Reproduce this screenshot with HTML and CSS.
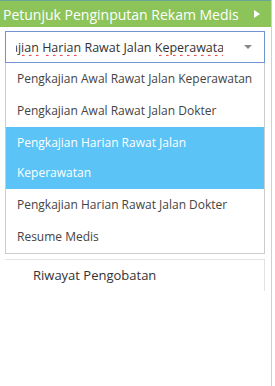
FILE: index.html
```html
<!DOCTYPE html>
<html lang="en">
<head>
    <meta charset="UTF-8">
    <meta name="viewport" content="width=device-width, initial-scale=1.0">
    <title>Petunjuk Penginputan Rekam Medis</title>
    <link rel="stylesheet" href="styles.css">
</head>
<body>
    <div class="sidebar">
        <div class="header">
            <span class="title">Petunjuk Penginputan Rekam Medis</span>
            <span class="arrow"></span>
        </div>

        <div class="select">
            <div class="select-text">
                <span class="scroll">a<span class="typo">jian</span> <span class="typo">Harian</span> Rawat Jalan <span class="typo">Keperawatan</span></span>
            </div>
            <span class="caret"></span>
        </div>

        <ul class="options">
            <li>Pengkajian Awal Rawat Jalan Keperawatan</li>
            <li>Pengkajian Awal Rawat Jalan Dokter</li>
            <li class="active">Pengkajian Harian Rawat Jalan Keperawatan</li>
            <li>Pengkajian Harian Rawat Jalan Dokter</li>
            <li>Resume Medis</li>
        </ul>

        <div class="panel">
            <div class="panel-item">Riwayat Pengobatan</div>
        </div>
    </div>
</body>
</html>
```

FILE: styles.css
```css
body {
    margin: 0;
    font-family: "Open Sans", Arial, sans-serif;
    background: #fff;
}
.sidebar {
    width: 272px;
    height: 386px;
    border-right: 1px solid #cfcfcf;
    box-sizing: border-box;
}
.header {
    display: flex;
    align-items: center;
    justify-content: space-between;
    height: 26px;
    border-top: 1px solid #6aa596;
    background-color: #8cc45a;
    color: #fff;
    padding: 0 11px 0 3px;
    font-size: 14px;
}
.arrow {
    width: 0;
    height: 0;
    border-top: 4px solid transparent;
    border-bottom: 4px solid transparent;
    border-left: 6px solid #fff;
}
.select {
    display: flex;
    align-items: center;
    justify-content: space-between;
    margin: 4px 6px 0 5px;
    height: 30px;
    border: 1px solid #7094d2;
    padding: 0 12px 0 10px;
}
.select-text {
    width: 207px;
    overflow: hidden;
    white-space: nowrap;
    font-size: 12.5px;
    color: #333;
}
.scroll {
    display: inline-block;
    margin-left: -5px;
}
.typo {
    text-decoration: underline wavy #e02020;
    text-decoration-thickness: 1px;
    text-underline-offset: 2px;
}
.caret {
    width: 0;
    height: 0;
    border-left: 4px solid transparent;
    border-right: 4px solid transparent;
    border-top: 4px solid #888;
}
.options {
    list-style: none;
    margin: 0 6px 0 5px;
    padding: 0;
    border: 1px solid #cccccc;
    border-top: none;
}
.options li {
    padding: 1px 11px;
    line-height: 30px;
    font-size: 12px;
    color: #444;
}
.options li.active {
    background-color: #5bc3f5;
    color: #fff;
}
.panel {
    margin: 5px 6px 0 5px;
    height: 31px;
    border-top: 1px solid #e2e2e2;
    border-right: 1px solid #e2e2e2;
}
.panel-item {
    padding-left: 28px;
    line-height: 30px;
    font-size: 13px;
    color: #333;
}
```
